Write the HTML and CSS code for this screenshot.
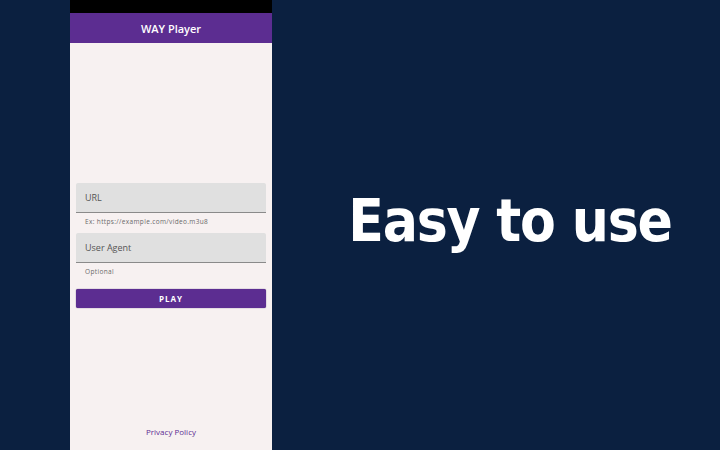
FILE: index.html
```html
<!DOCTYPE html>
<html>
<head>
<meta charset="utf-8">
<link rel="stylesheet" href="styles.css">
</head>
<body>
<div class="stage">
  <div class="phone">
    <div class="statusbar"></div>
    <div class="appbar">WAY Player</div>
    <div class="content">
      <div class="form">
        <div class="field"><span class="label">URL</span></div>
        <div class="helper">Ex: https://example.com/video.m3u8</div>
        <div class="field"><span class="label">User Agent</span></div>
        <div class="helper">Optional</div>
        <div class="button">PLAY</div>
      </div>
      <div class="footer">Privacy Policy</div>
    </div>
  </div>
  <div class="headline">Easy to use</div>
</div>
</body>
</html>
```
FILE: styles.css
```css
html, body { margin: 0; padding: 0; }
body {
  width: 720px; height: 450px; overflow: hidden;
  background: #0b2040;
  font-family: "Open Sans", "Noto Sans", sans-serif;
}
.stage { display: flex; height: 450px; padding-left: 70px; }
.phone {
  width: 202px; height: 450px; display: flex; flex-direction: column;
  background: #f7f1f1;
}
.statusbar { height: 13px; background: #000; }
.appbar {
  height: 30px; background: #5c2d91; color: #fff;
  display: flex; align-items: center; justify-content: center;
  font-size: 11px; font-weight: 600;
}
.content { flex: 1; display: flex; flex-direction: column; padding: 0 6px; }
.form { padding-top: 140px; display: flex; flex-direction: column; }
.field {
  height: 29px; background: #e0e0e0; border-bottom: 1px solid #8a8a8a;
  border-radius: 2px 2px 0 0; display: flex; align-items: center; padding-left: 9px;
}
.label { font-size: 9px; color: #555; }
.helper { font-size: 6.5px; color: #6a6a6a; padding: 4px 0 0 9px; height: 16px; box-sizing: border-box; letter-spacing: 0.35px; }
.helper + .field { margin-top: 4px; }
.button {
  margin-top: 10px; height: 19px; background: #5c2d91; color: #fff;
  border-radius: 2px; display: flex; align-items: center; justify-content: center;
  font-size: 8px; font-weight: 700; letter-spacing: 1px; box-shadow: 0 0 1px #3a1b60;
}
.footer { margin-top: auto; padding-bottom: 13px; text-align: center; font-size: 8px; color: #5c2d91; }
.headline {
  flex: 1; display: flex; align-items: center; justify-content: center;
  color: #fff; font-family: "DejaVu Sans Condensed", "DejaVu Sans", sans-serif; font-weight: 700;
  font-size: 58px; padding: 0 0 9px 28px; letter-spacing: -1.2px;
}
```
